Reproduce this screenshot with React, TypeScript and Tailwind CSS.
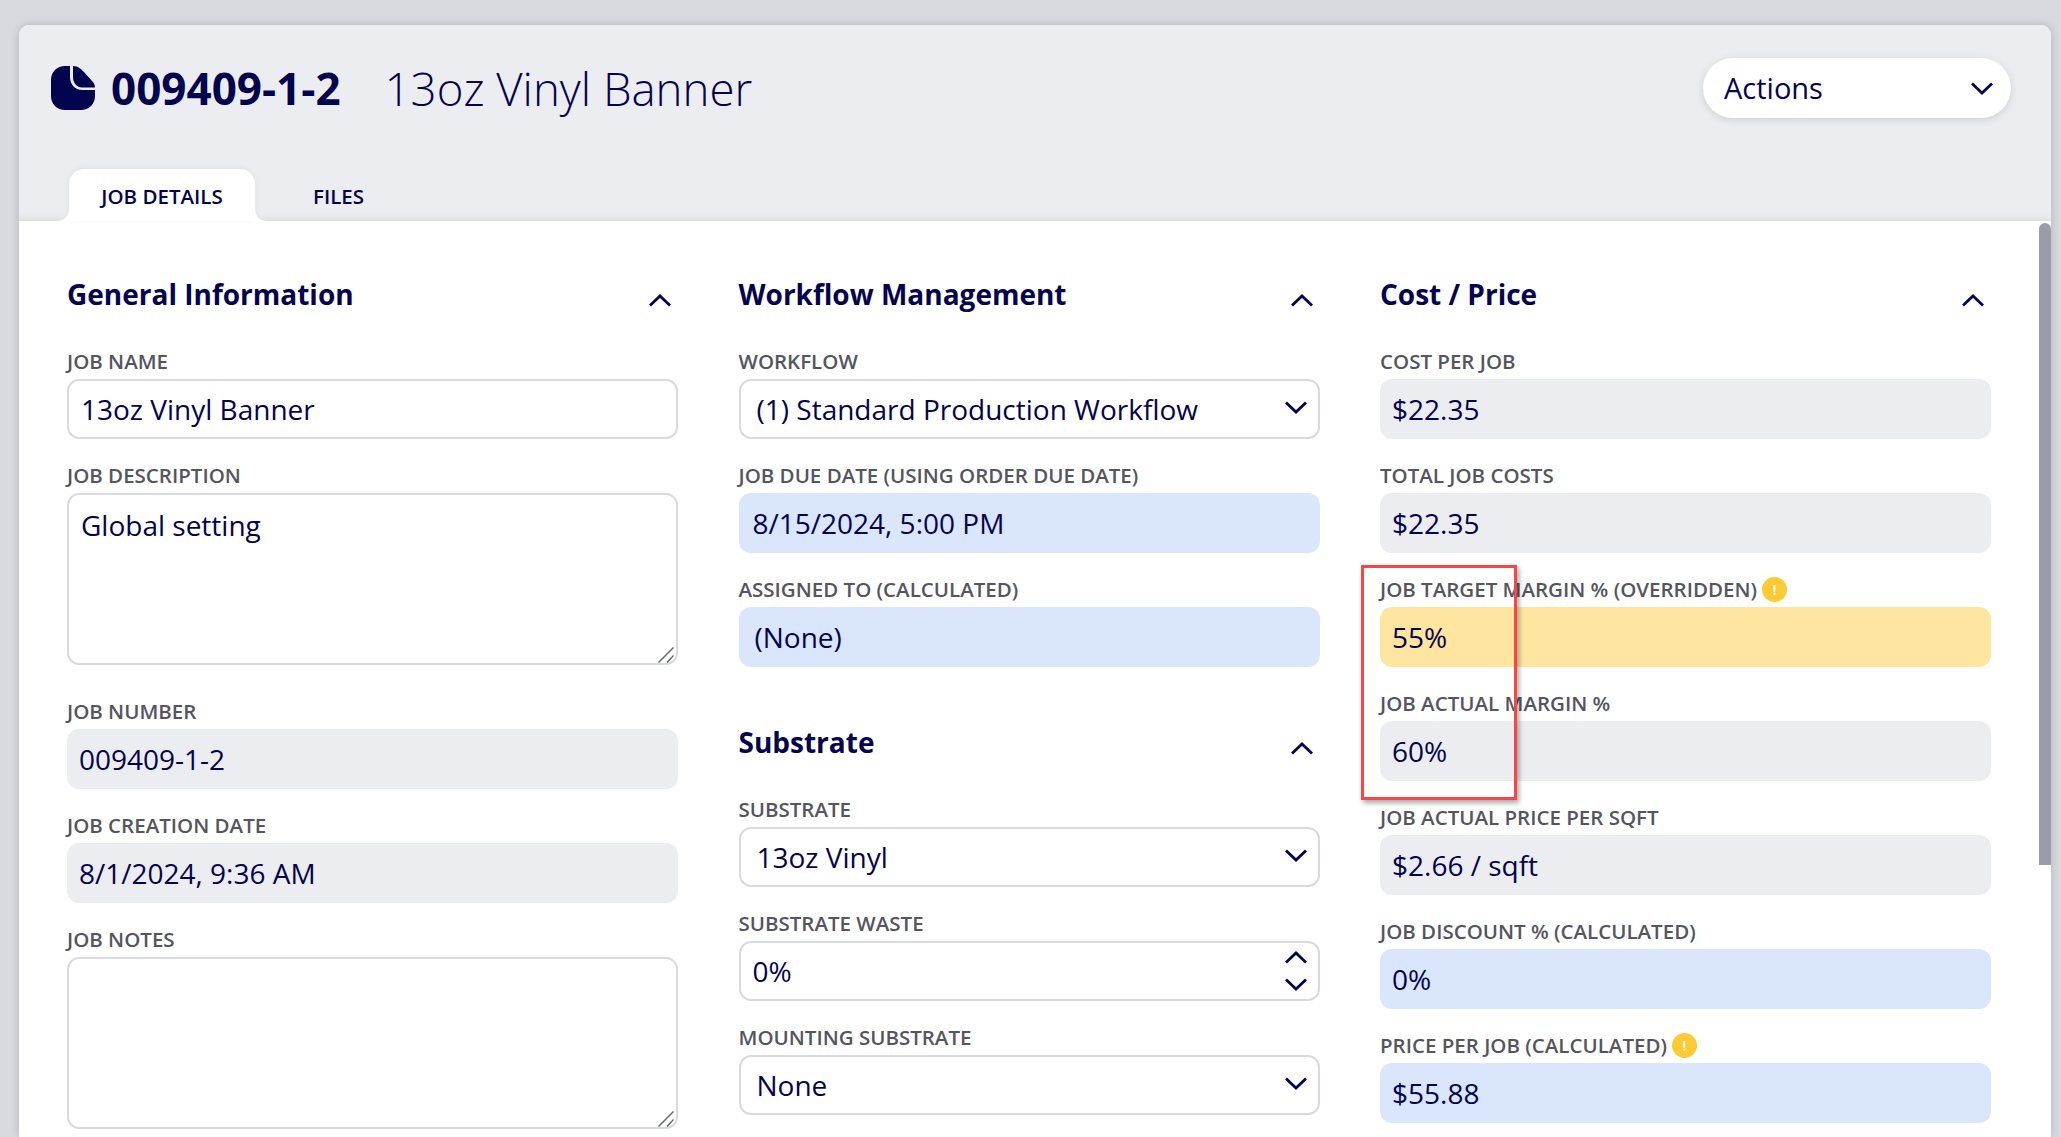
import React from "react";

const Chevron = ({ up = false, className = "" }: { up?: boolean; className?: string }) => (
  <svg width="24" height="13" viewBox="0 0 24 13" fill="none" className={className}>
    <path
      d={up ? "M2 11.5 L12 2 L22 11.5" : "M2 1.5 L12 11 L22 1.5"}
      stroke="#04044e"
      strokeWidth="2.8"
    />
  </svg>
);

const Warn = () => (
  <span className="ml-[5px] flex h-[25px] w-[25px] items-center justify-center rounded-full bg-[#fccb33] text-[15px] font-semibold leading-none text-white">
    !
  </span>
);

const Label = ({ text, warn }: { text: string; warn?: boolean }) => (
  <div className="mb-[5px] flex h-[26px] items-center whitespace-nowrap text-[20.5px] font-semibold uppercase text-[#54555f]">
    {text}
    {warn && <Warn />}
  </div>
);

const fieldBase =
  "block h-[59.5px] w-full rounded-[12px] text-[28px] text-[#04044e] outline-none mb-[23.5px]";

const TextField = ({ label, value }: { label: string; value: string }) => (
  <div>
    <Label text={label} />
    <input readOnly value={value} className={`${fieldBase} border-2 border-[#d9dae0] bg-white px-[12px]`} />
  </div>
);

const ReadOnlyField = ({
  label,
  value,
  warn,
  tone = "grey",
  padding = "px-[12px]",
}: {
  label: string;
  value: string;
  warn?: boolean;
  tone?: "grey" | "blue" | "yellow";
  padding?: string;
}) => (
  <div>
    <Label text={label} warn={warn} />
    <input
      readOnly
      value={value}
      className={`${fieldBase} ${padding} ${
        tone === "blue" ? "bg-[#d9e6fc]" : tone === "yellow" ? "bg-[#fee5a0]" : "bg-[#ecedf1]"
      }`}
    />
  </div>
);

const SelectField = ({ label, value }: { label: string; value: string }) => (
  <div>
    <Label text={label} />
    <div className={`${fieldBase} flex items-center justify-between border-2 border-[#d9dae0] bg-white pl-[16px] pr-[10px]`}>
      <span>{value}</span>
      <Chevron className="-mt-[2px]" />
    </div>
  </div>
);

const NumberField = ({ label, value }: { label: string; value: string }) => (
  <div>
    <Label text={label} />
    <div className={`${fieldBase} flex items-center justify-between border-2 border-[#d9dae0] bg-white pl-[12px] pr-[10px]`}>
      <span>{value}</span>
      <div className="flex flex-col gap-[14px]">
        <Chevron up />
        <Chevron />
      </div>
    </div>
  </div>
);

const AreaField = ({ label, value = "" }: { label: string; value?: string }) => (
  <div>
    <Label text={label} />
    <div className="relative mb-[33px]">
      <textarea
        readOnly
        value={value}
        className="block h-[172px] w-full resize-none rounded-[12px] border-2 border-[#d9dae0] bg-white px-[12px] pb-[6px] pt-[9px] text-[28px] text-[#04044e] outline-none"
      />
      <svg width="16" height="16" viewBox="0 0 16 16" className="absolute bottom-[2px] right-[4px]" fill="none" stroke="#666a70" strokeWidth="1.5">
        <path d="M0.5 15.5 L15.5 0.5 M9 15.5 L15.5 8.5" />
      </svg>
    </div>
  </div>
);

const SectionTitle = ({ title }: { title: string }) => (
  <div className="mb-[34px] flex h-[40px] items-center justify-between pr-[6px]">
    <h2 className="text-[28px] font-bold text-[#04044e]">{title}</h2>
    <Chevron up className="mt-[12px]" />
  </div>
);

export default function App() {
  return (
    <div className="h-[1137px] w-[2061px] overflow-hidden bg-[#d9dae0] pl-[19px] pt-[25px] font-['Open_Sans',sans-serif]">
      <div className="relative h-[1112px] w-[2032px] overflow-hidden rounded-t-[10px] bg-white shadow-[0_0_10px_rgba(0,0,0,0.18)]">
        {/* header */}
        <div className="h-[196px] bg-[#ecedf1] pt-[33px] shadow-[inset_0_-8px_8px_-8px_rgba(0,0,0,0.12)]">
          <div className="flex h-[60px] items-center justify-between pl-[32px] pr-[40px]">
            <div className="flex items-center text-[#04044e]">
              <svg width="44" height="44" viewBox="0 0 44 44" className="shrink-0" fill="#04044e">
                <path d="M14 0 H19 V11 C19 18 24 24 31 24 H44 V30 C44 38 38 44 30 44 H14 C6 44 0 38 0 30 V14 C0 6 6 0 14 0 Z" />
                <path d="M22 0 C27 0 30 3 33 6 L41 15 C43 17 44 19 44 21.5 H31 C26 21.5 22 17 22 11 Z" />
              </svg>
              <span className="ml-[16px] text-[44px] font-bold leading-[50px]">009409-1-2</span>
              <span className="ml-[44px] text-[45.6px] font-light leading-[50px]">13oz Vinyl Banner</span>
            </div>
            <div className="flex h-[60px] w-[308px] items-center justify-between rounded-[30px] bg-white pl-[21px] pr-[17px] text-[29px] text-[#04044e] shadow-[0_2px_8px_rgba(0,0,0,0.12)]">
              <span>Actions</span>
              <Chevron />
            </div>
          </div>
          {/* tabs */}
          <div className="mt-[51px] flex items-end pl-[50px]">
            <div className="relative flex h-[52px] w-[186px] items-center justify-center rounded-t-[15px] bg-white pt-[3px] text-[20.5px] font-semibold text-[#04044e] shadow-[0_-1px_6px_rgba(0,0,0,0.06)]">
              JOB DETAILS
              <svg width="12" height="12" viewBox="0 0 12 12" className="absolute bottom-0 left-[-12px]" fill="#fff">
                <path d="M12 0 C12 7 7 12 0 12 H12 Z" />
              </svg>
              <svg width="12" height="12" viewBox="0 0 12 12" className="absolute bottom-0 right-[-12px]" fill="#fff">
                <path d="M0 0 C0 7 5 12 12 12 H0 Z" />
              </svg>
            </div>
            <div className="flex h-[52px] items-center pl-[58px] pt-[3px] text-[20.5px] font-semibold text-[#04044e]">FILES</div>
          </div>
        </div>

        {/* body */}
        <div className="grid grid-cols-[611px_581px_611px] gap-x-[60.5px] pl-[48px] pt-[53px]">
          <div>
            <SectionTitle title="General Information" />
            <TextField label="Job Name" value="13oz Vinyl Banner" />
            <AreaField label="Job Description" value="Global setting" />
            <ReadOnlyField label="Job Number" value="009409-1-2" />
            <ReadOnlyField label="Job Creation Date" value="8/1/2024, 9:36 AM" />
            <AreaField label="Job Notes" />
          </div>
          <div>
            <SectionTitle title="Workflow Management" />
            <SelectField label="Workflow" value="(1) Standard Production Workflow" />
            <ReadOnlyField label="Job Due Date (Using Order Due Date)" value="8/15/2024, 5:00 PM" tone="blue" padding="px-[14px]" />
            <ReadOnlyField label="Assigned To (Calculated)" value="(None)" tone="blue" padding="px-[16px]" />
            <div className="h-[32px]" />
            <SectionTitle title="Substrate" />
            <SelectField label="Substrate" value="13oz Vinyl" />
            <NumberField label="Substrate Waste" value="0%" />
            <SelectField label="Mounting Substrate" value="None" />
          </div>
          <div>
            <SectionTitle title="Cost / Price" />
            <ReadOnlyField label="Cost Per Job" value="$22.35" />
            <ReadOnlyField label="Total Job Costs" value="$22.35" />
            <ReadOnlyField label="Job Target Margin % (Overridden)" value="55%" warn tone="yellow" />
            <ReadOnlyField label="Job Actual Margin %" value="60%" />
            <ReadOnlyField label="Job Actual Price Per SQFT" value="$2.66 / sqft" />
            <ReadOnlyField label="Job Discount % (Calculated)" value="0%" tone="blue" />
            <ReadOnlyField label="Price Per Job (Calculated)" value="$55.88" warn tone="blue" />
          </div>
        </div>

        {/* scrollbar */}
        <div className="absolute right-0 top-[198px] h-[642px] w-[12px] rounded-t-[6px] bg-[#9a9ca8]" />
        {/* annotation */}
        <div className="absolute left-[1342px] top-[540px] h-[235px] w-[156px] border-[3px] border-[#f44848] shadow-[2px_3px_5px_rgba(0,0,0,0.35)]" />
      </div>
    </div>
  );
}
